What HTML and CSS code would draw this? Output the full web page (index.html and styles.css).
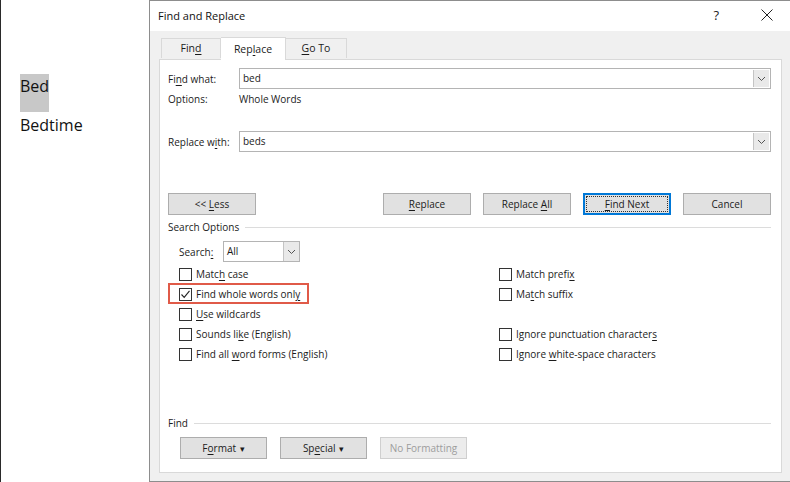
FILE: index.html
```html
<!DOCTYPE html>
<html>
<head>
<meta charset="utf-8">
<link rel="stylesheet" href="styles.css">
</head>
<body>
<div class="doc">
  <div class="hl">Bed</div>
  <div class="docline">Bedtime</div>
</div>
<div class="dialog">
  <div class="titlebar">
    <span class="title">Find and Replace</span>
    <span class="help">?</span>
    <svg class="close" width="12" height="12" viewBox="0 0 12 12"><path d="M0.5 0.5 L11.5 11.5 M11.5 0.5 L0.5 11.5" stroke="#222" stroke-width="1" fill="none"/></svg>
  </div>
  <div class="dbody">
    <div class="tabs">
      <div class="tab">Fin<u>d</u></div>
      <div class="tab active">Rep<u>l</u>ace</div>
      <div class="tab"><u>G</u>o To</div>
    </div>
    <div class="panel">
      <div class="field first">
        <span class="flabel">Fi<u>n</u>d what:</span>
        <div class="combo"><span class="ctext">bed</span><span class="cbtn"><svg width="9" height="6" viewBox="0 0 9 6"><path d="M1 1 L4.5 4.5 L8 1" stroke="#555" fill="none"/></svg></span></div>
      </div>
      <div class="field opts">
        <span class="flabel">Options:</span>
        <span>Whole Words</span>
      </div>
      <div class="field repl">
        <span class="flabel">Replace w<u>i</u>th:</span>
        <div class="combo"><span class="ctext">beds</span><span class="cbtn"><svg width="9" height="6" viewBox="0 0 9 6"><path d="M1 1 L4.5 4.5 L8 1" stroke="#555" fill="none"/></svg></span></div>
      </div>
      <div class="btnrow">
        <button class="btn"><span>&lt;&lt; <u>L</u>ess</span></button>
        <div class="grow"></div>
        <button class="btn"><span><u>R</u>eplace</span></button>
        <button class="btn"><span>Replace <u>A</u>ll</span></button>
        <button class="btn focus"><span class="focusin"><span><u>F</u>ind Next</span></span></button>
        <button class="btn"><span>Cancel</span></button>
      </div>
      <div class="group"><span>Search Options</span><span class="rule"></span></div>
      <div class="searchrow">
        <span class="slabel">Search<u>:</u></span>
        <div class="select"><span class="ctext">All</span><span class="sbtn"><svg width="9" height="6" viewBox="0 0 9 6"><path d="M1 1 L4.5 4.5 L8 1" stroke="#555" fill="none"/></svg></span></div>
      </div>
      <div class="checks">
        <div class="col">
          <label class="chk"><span class="box"></span><span>Matc<u>h</u> case</span></label>
          <label class="chk marked"><span class="box"><svg width="11" height="11" viewBox="0 0 11 11"><path d="M1.5 5.5 L4.2 8.3 L9.5 1.8" stroke="#222" stroke-width="1.1" fill="none"/></svg></span><span>Find whole words onl<u>y</u></span></label>
          <label class="chk"><span class="box"></span><span><u>U</u>se wildcards</span></label>
          <label class="chk"><span class="box"></span><span>Sounds li<u>k</u>e (English)</span></label>
          <label class="chk"><span class="box"></span><span>Find all <u>w</u>ord forms (English)</span></label>
        </div>
        <div class="col">
          <label class="chk"><span class="box"></span><span>Match prefi<u>x</u></span></label>
          <label class="chk"><span class="box"></span><span>Ma<u>t</u>ch suffix</span></label>
          <div class="chk empty"></div>
          <label class="chk"><span class="box"></span><span>Ignore punctuation character<u>s</u></span></label>
          <label class="chk"><span class="box"></span><span>Ignore <u>w</u>hite-space characters</span></label>
        </div>
      </div>
      <div class="bottom">
        <div class="group"><span>Find</span><span class="rule"></span></div>
        <div class="btnrow2">
          <button class="btn"><span>F<u>o</u>rmat <span class="caret">▾</span></span></button>
          <button class="btn"><span>Sp<u>e</u>cial <span class="caret">▾</span></span></button>
          <button class="btn disabled"><span>No Formatting</span></button>
        </div>
      </div>
    </div>
  </div>
</div>
</body>
</html>
```

FILE: styles.css
```css
html, body {
  margin: 0;
  padding: 0;
  background: #ffffff;
}
body {
  display: flex;
  width: 790px;
  height: 482px;
  overflow: hidden;
  font-family: "Open Sans", "Noto Sans", sans-serif;
  font-size: 10px;
  color: #1b1b1b;
}
u { text-decoration-thickness: 1px; text-underline-offset: 2px; }

.doc {
  width: 149px;
  flex: none;
  border-left: 1px solid #2a2a2a;
  padding: 74px 0 0 19px;
  box-sizing: border-box;
  font-size: 16px;
  color: #111;
}
.hl {
  display: inline-block;
  background: #c8c8c8;
  width: 29px;
  height: 38px;
  line-height: 24px;
  box-sizing: border-box;
  white-space: nowrap;
}
.docline {
  margin-top: 1px;
  line-height: 24px;
}

.dialog {
  flex: 1;
  display: flex;
  flex-direction: column;
  border: 1px solid #8d8d8d;
  border-right: none;
  background: #f0f0f0;
}
.titlebar {
  height: 30px;
  flex: none;
  background: #ffffff;
  display: flex;
  align-items: center;
  padding-left: 8px;
}
.title { font-size: 11px; flex: 1; color: #111; margin-top: -2px; }
.help { font-size: 13px; margin-right: 42px; color: #222; margin-top: -2px; }
.close { margin-right: 17px; margin-top: -2px; }

.dbody {
  flex: 1;
  display: flex;
  flex-direction: column;
  padding: 6px 8px 8px 9px;
  min-height: 0;
}
.tabs {
  display: flex;
  align-items: flex-end;
  height: 22px;
  padding-left: 2px;
  position: relative;
  z-index: 1;
}
.tab {
  height: 20px;
  line-height: 19px;
  box-sizing: border-box;
  border: 1px solid #d9d9d9;
  border-bottom: none;
  background: #f0f0f0;
  text-align: center;
  width: 60px;
  margin-bottom: 1px;
  font-size: 10.5px;
}
.tab.active {
  height: 23px;
  width: 65px;
  line-height: 22px;
  background: #ffffff;
  margin-bottom: -1px;
  border-color: #d9d9d9;
}
.tab + .tab { border-left: none; }
.tab.active + .tab { border-left: none; width: 61px; }

.panel {
  flex: 1;
  background: #ffffff;
  border: 1px solid #d9d9d9;
  padding: 0 10px 13px 8px;
  display: flex;
  flex-direction: column;
}
.field {
  display: flex;
  align-items: center;
}
.field.first { margin-top: 8px; height: 21px; }
.field.opts { height: 20px; }
.field.repl { margin-top: 22px; height: 21px; }
.flabel { width: 71px; flex: none; }
.combo {
  flex: 1;
  height: 21px;
  box-sizing: border-box;
  border: 1px solid #b4b4b4;
  display: flex;
  align-items: stretch;
}
.ctext { flex: 1; padding-left: 3px; line-height: 18px; }
.cbtn {
  width: 15px;
  background: #e9e9e9;
  border-left: 1px solid #c4c4c4;
  display: flex;
  align-items: center;
  justify-content: center;
  margin: 1px;
}

.btnrow {
  display: flex;
  margin-top: 41px;
  gap: 12px;
  height: 22px;
}
.grow { flex: 1; }
.btn {
  width: 88px;
  height: 22px;
  box-sizing: border-box;
  background: #e1e1e1;
  border: 1px solid #adadad;
  font-family: inherit;
  font-size: 10px;
  color: #1b1b1b;
  padding: 0;
  display: flex;
  align-items: center;
  justify-content: center;
  white-space: pre;
}
.btn.focus {
  border: 1px solid #0078d7;
  box-shadow: inset 0 0 0 1px #0078d7;
  padding: 2px;
}
.focusin {
  flex: 1;
  align-self: stretch;
  border: 1px dotted #333;
  display: flex;
  align-items: center;
  justify-content: center;
}
.btn.disabled {
  background: #ececec;
  border-color: #cfcfcf;
  color: #9d9d9d;
}
.caret { font-size: 9px; margin-left: 1px; }

.group {
  display: flex;
  align-items: center;
  height: 18px;
  margin-top: 3px;
}
.rule {
  flex: 1;
  height: 1px;
  background: #dcdcdc;
  margin-left: 6px;
}

.searchrow {
  display: flex;
  align-items: center;
  margin-top: 5px;
  padding-left: 11px;
  height: 21px;
}
.slabel { width: 44px; }
.select {
  width: 77px;
  height: 21px;
  box-sizing: border-box;
  border: 1px solid #b4b4b4;
  display: flex;
}
.sbtn {
  width: 15px;
  background: #e9e9e9;
  border-left: 1px solid #c4c4c4;
  display: flex;
  align-items: center;
  justify-content: center;
}

.checks {
  display: flex;
  margin-top: 2px;
  padding-left: 11px;
}
.col {
  display: flex;
  flex-direction: column;
}
.col:first-child { width: 320px; }
.chk {
  height: 20px;
  display: flex;
  align-items: center;
  position: relative;
}
.chk span:last-child { margin-top: -1px; }
.box {
  width: 13px;
  height: 13px;
  box-sizing: border-box;
  border: 1px solid #333;
  background: #fff;
  margin-right: 4px;
  display: flex;
  align-items: center;
  justify-content: center;
}
.chk.marked::after {
  content: "";
  position: absolute;
  left: -11px;
  top: -1px;
  width: 141px;
  height: 21px;
  box-sizing: border-box;
  border: 2px solid #e05a48;
}

.bottom {
  margin-top: auto;
}
.btnrow2 {
  display: flex;
  gap: 13px;
  margin-top: 5px;
  padding-left: 12px;
}
.btnrow2 .btn { width: 87px; }
```
